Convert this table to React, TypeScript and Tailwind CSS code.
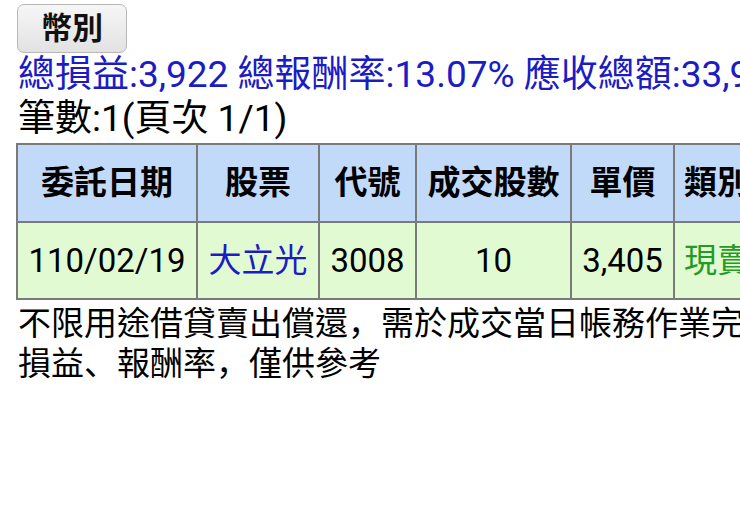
const headers = ["委託日期", "股票", "代號", "成交股數", "單價", "類別", "損益", "報酬率"];
const widths = [180, 122, 97, 155, 103, 86, 120, 140];

const cell = "border-2 border-[#7a7a7a] text-center";

// 標點用日文字型，讓逗號落在左下角
const Punct = ({ ch }: { ch: string }) => (
  <span style={{ fontFamily: '"Noto Sans CJK JP", sans-serif' }}>{ch}</span>
);

export default function App() {
  return (
    <div
      className="w-[740px] h-[506px] overflow-hidden bg-white text-black"
      style={{ fontFamily: 'Roboto, "Noto Sans CJK TC", sans-serif' }}
    >
      <div className="pl-[17px] pt-[4px]">
        <button className="w-[110px] h-[49px] rounded-[7px] border border-[#b8b8b8] bg-gradient-to-b from-[#f6f6f6] to-[#e2e2e2] text-[31px] font-bold leading-none text-[#111]">
          幣別
        </button>
      </div>

      <div className="pl-[18px] whitespace-nowrap text-[37px] leading-[44px] text-[#1c1cc4]">
        總損益:3,922 總報酬率:13.07% 應收總額:33,922
      </div>
      <div className="pl-[18px] whitespace-nowrap text-[37px] leading-[44px]">
        筆數:1(頁次 1/1)
      </div>

      <table className="ml-[16px] mt-[2px] table-fixed w-[1003px] border-collapse text-[33px] whitespace-nowrap">
        <colgroup>
          {widths.map((w, i) => (
            <col key={i} style={{ width: w }} />
          ))}
        </colgroup>
        <thead>
          <tr className="bg-[#c2daf9] h-[78px]">
            {headers.map((h) => (
              <th key={h} className={`${cell} font-bold`}>
                {h}
              </th>
            ))}
          </tr>
        </thead>
        <tbody>
          <tr className="bg-[#e2fad2] h-[77px]">
            <td className={cell}>110/02/19</td>
            <td className={`${cell} text-[#1c1cc4]`}>大立光</td>
            <td className={cell}>3008</td>
            <td className={cell}>10</td>
            <td className={cell}>3,405</td>
            <td className={`${cell} text-[#249b24]`}>現賣</td>
            <td className={cell}>3,922</td>
            <td className={cell}>13.07%</td>
          </tr>
        </tbody>
      </table>

      <div
        className="pl-[18px] pt-[1px] text-[33px] leading-[40px] whitespace-nowrap"
        style={{ fontFamily: '"Noto Sans CJK TC", sans-serif' }}
      >
        <div>
          不限用途借貸賣出償還<Punct ch="，" />需於成交當日帳務作業完成後
        </div>
        <div>
          損益<Punct ch="、" />報酬率<Punct ch="，" />僅供參考
        </div>
      </div>
    </div>
  );
}
